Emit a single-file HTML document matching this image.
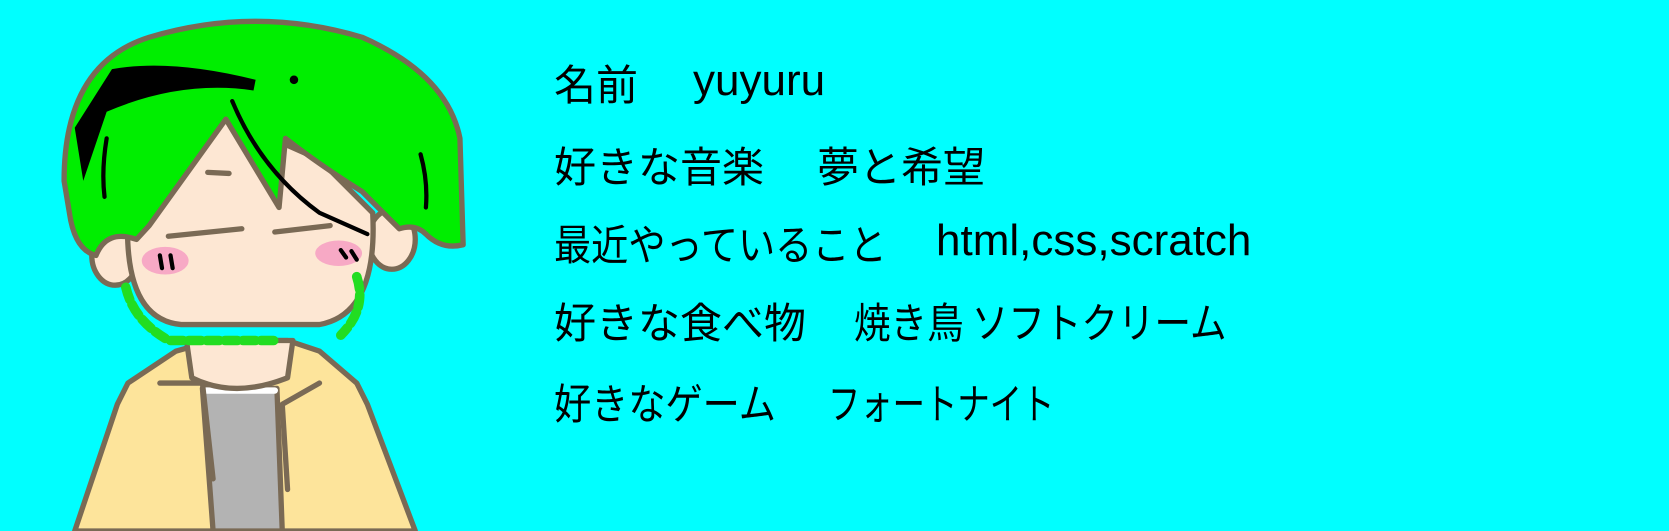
<!DOCTYPE html>
<html><head><meta charset="utf-8"><style>
html,body{margin:0;padding:0}
body{width:1669px;height:499px;background:#00ffff;position:relative;overflow:hidden;font-family:"Liberation Sans","Noto Sans CJK JP",sans-serif;color:#000}
.t{position:absolute;font-size:42px;line-height:52px;white-space:nowrap;font-family:"Noto Sans CJK JP","Liberation Sans",sans-serif;transform-origin:0 50%}
.l{font-family:"Liberation Sans","Noto Sans CJK JP",sans-serif;font-size:44px}
svg{position:absolute;left:0;top:0}
</style></head><body>
<svg width="490" height="531" viewBox="0 0 460 499">
<g stroke="#7a6a55" stroke-width="5" stroke-linejoin="round" stroke-linecap="round">
<path d="M70 499 L110 380 L120 360 L165 330 L200 320 L270 320 L300 330 L335 360 L345 380 L390 499 Z" fill="#fde49b"/>
<path d="M190 365 L260 365 L265 499 L200 499 Z" fill="#b3b3b3"/>
<path d="M192 367 L258 367" stroke="#fff" stroke-width="6"/>
<path d="M150 360 L190 360 L200 450" fill="none"/>
<path d="M300 360 L265 380 L270 460" fill="none"/>
<path d="M175 320 L180 355 Q220 375 270 355 L275 320 Z" fill="#fde7d3"/>
<ellipse cx="108" cy="240" rx="22" ry="28" fill="#fde7d3"/>
<ellipse cx="368" cy="225" rx="22" ry="28" fill="#fde7d3"/>
<path d="M120 200 Q115 300 170 305 L300 305 Q355 295 350 200 L300 150 L210 110 Z" fill="#fde7d3"/>
<path d="M60 170 Q60 60 140 35 Q240 5 340 35 Q420 70 432 130 L435 230 Q415 235 400 220 Q390 210 375 215 L340 180 Q300 155 268 130 L262 195 L212 112 L140 212 L128 225 Q100 215 90 240 Q70 235 65 200 Z" fill="#00ee00"/>
</g>
<path d="M105 65 Q160 55 240 75 L238 85 Q170 75 100 105 L78 170 L70 120 Z" fill="#000"/>
<circle cx="276" cy="75" r="4" fill="#000"/>
<path d="M100 130 Q95 160 98 185 M395 145 Q402 170 400 195 M218 95 Q245 160 300 200 L345 220" stroke="#000" stroke-width="4" fill="none" stroke-linecap="round"/>
<path d="M158 222 L227 215 M258 218 L310 212 M195 162 L215 163" stroke="#7a6a55" stroke-width="5" stroke-linecap="round"/>
<ellipse cx="155" cy="245" rx="22" ry="13" fill="#f7a9c5"/>
<ellipse cx="318" cy="238" rx="22" ry="12" fill="#f7a9c5"/>
<path d="M150 240 L152 252 M160 240 L162 252 M320 235 L325 242 M330 236 L335 244" stroke="#000" stroke-width="4" stroke-linecap="round"/>
<path d="M118 270 Q125 300 155 318 M335 260 Q345 290 320 315 M160 320 L260 320" stroke="#22dd22" stroke-width="9" fill="none" stroke-dasharray="12 5" stroke-linecap="round"/>
</svg>
<div class="t" style="left:554px;top:57px">名前</div><div class="t l" style="left:693px;top:55px">yuyuru</div>
<div class="t" style="left:554px;top:139px">好きな音楽</div><div class="t" style="left:817px;top:139px">夢と希望</div>
<div class="t" style="left:554px;top:217px;transform:scaleX(0.885)">最近やっていること</div><div class="t l" style="left:936px;top:215px">html,css,scratch</div>
<div class="t" style="left:554px;top:295px">好きな食べ物</div><div class="t" style="left:854px;top:295px;transform:scaleX(0.87)">焼き鳥 ソフトクリーム</div>
<div class="t" style="left:554px;top:376px;transform:scaleX(0.885)">好きなゲーム</div><div class="t" style="left:828px;top:376px;transform:scaleX(0.77)">フォートナイト</div>
</body></html>
